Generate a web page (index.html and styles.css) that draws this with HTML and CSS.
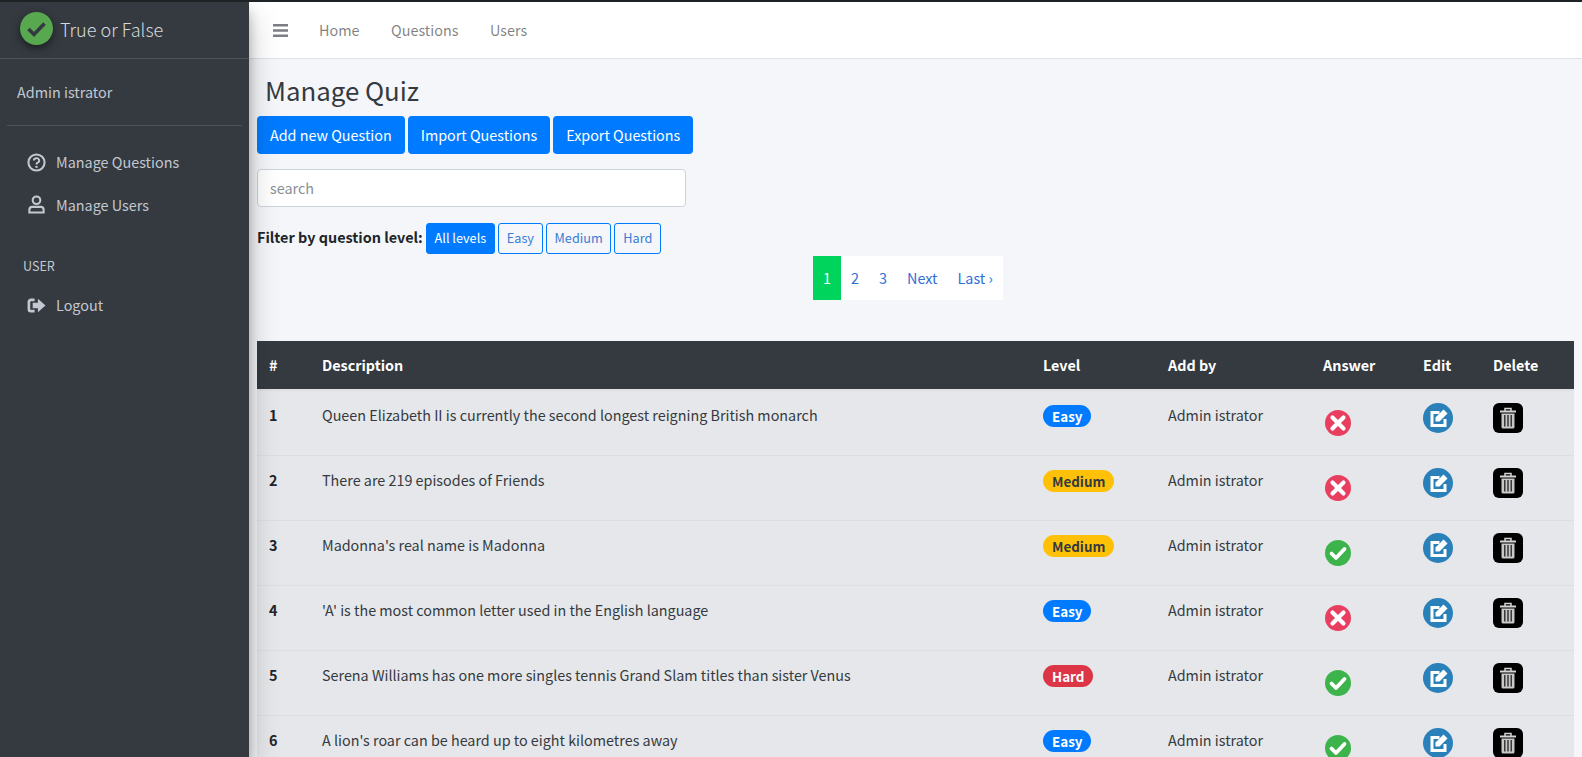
FILE: index.html
```html
<!DOCTYPE html>
<html lang="en">
<head>
  <meta charset="UTF-8">
  <title>Manage Quiz</title>
  <link rel="stylesheet" href="styles.css">
</head>
<body>
  <svg class="defs" width="0" height="0">
    <symbol id="i-check" viewBox="0 0 26 26">
      <circle cx="13" cy="13" r="13" fill="#3cb44b"/>
      <path d="M6.500 13.500l4.500 4.500 8.500-9" fill="none" stroke="#fff" stroke-width="3.800" stroke-linecap="round" stroke-linejoin="round"/>
    </symbol>
    <symbol id="i-cross" viewBox="0 0 26 26">
      <circle cx="13" cy="13" r="13" fill="#e83e5f"/>
      <path d="M7.500 7.500l11 11M18.500 7.500l-11 11" fill="none" stroke="#fff" stroke-width="4.200" stroke-linecap="round"/>
    </symbol>
    <symbol id="i-edit" viewBox="0 0 30 30">
      <circle cx="15" cy="15" r="15" fill="#2a80b9"/>
      <path d="M16.500 9.500H9v13h13V16" fill="none" stroke="#fff" stroke-width="3"/>
      <path d="M12.500 18.500v-4l8-8 4 4-8 8z" fill="#fff"/>
    </symbol>
    <symbol id="i-trash" viewBox="0 0 30 30">
      <rect width="30" height="30" rx="6" fill="#000"/>
      <path d="M7 8.500h16" stroke="#d4d4d4" stroke-width="2"/>
      <path d="M12 8V5.500h6V8" fill="none" stroke="#d4d4d4" stroke-width="1.500"/>
      <path d="M8.500 10.500h13v13.500a1.500 1.500 0 0 1-1.500 1.500H10a1.500 1.500 0 0 1-1.500-1.500z" fill="#c8c8c8"/>
      <path d="M11.800 12v11.500M15 12v11.500M18.200 12v11.500" stroke="#222" stroke-width="1.300"/>
    </symbol>
  </svg>

  <aside class="sidebar">
    <div class="brand">
      <svg class="brand-logo" viewBox="0 0 33 33">
        <circle cx="16.500" cy="16.500" r="16.500" fill="#58a84f"/>
        <path d="M8.500 17l5.500 5.500 10.500-11" fill="none" stroke="#343a40" stroke-width="3.600"/>
      </svg>
      <span>True or False</span>
    </div>
    <div class="user-panel">Admin istrator</div>
    <nav class="side-nav">
      <a href="#">
        <svg class="side-icon" viewBox="0 0 20 20">
          <circle cx="10" cy="10" r="8.500" fill="none" stroke="currentColor" stroke-width="2.200"/>
          <path d="M7.200 8a2.800 2.500 0 1 1 4 2.200c-.9.500-1.200.9-1.200 1.800" fill="none" stroke="currentColor" stroke-width="2"/>
          <circle cx="10" cy="14.600" r="1.300" fill="currentColor"/>
        </svg>
        Manage Questions
      </a>
      <a href="#">
        <svg class="side-icon" viewBox="0 0 20 20">
          <circle cx="10" cy="5.500" r="4" fill="none" stroke="currentColor" stroke-width="2.200"/>
          <path d="M2.500 18.500v-3a3 3 0 0 1 3-3h9a3 3 0 0 1 3 3v3z" fill="none" stroke="currentColor" stroke-width="2.200"/>
        </svg>
        Manage Users
      </a>
      <div class="side-header">USER</div>
      <a href="#">
        <svg class="side-icon" viewBox="0 0 20 20">
          <path d="M8 4H4a2 2 0 0 0-2 2v8a2 2 0 0 0 2 2h4" fill="none" stroke="currentColor" stroke-width="2.800"/>
          <path d="M6 7h5.500V3L19.500 10l-8 7v-4H6z" fill="currentColor"/>
        </svg>
        Logout
      </a>
    </nav>
  </aside>

  <div class="wrapper">
    <header class="topbar">
      <svg class="burger" viewBox="0 0 15 13">
        <path d="M0 1.200h15M0 6.500h15M0 11.800h15" stroke="#7b7f84" stroke-width="2.400"/>
      </svg>
      <a href="#">Home</a>
      <a href="#">Questions</a>
      <a href="#">Users</a>
    </header>

    <main class="content">
      <h1>Manage Quiz</h1>
      <div class="actions">
        <button class="btn">Add new Question</button>
        <button class="btn">Import Questions</button>
        <button class="btn">Export Questions</button>
      </div>
      <input class="search" type="text" placeholder="search">
      <div class="filter">
        <b>Filter by question level:</b>
        <button class="chip active">All levels</button>
        <button class="chip">Easy</button>
        <button class="chip">Medium</button>
        <button class="chip">Hard</button>
      </div>
      <div class="pager">
        <a class="current" href="#">1</a>
        <a href="#">2</a>
        <a href="#">3</a>
        <a class="wide" href="#">Next</a>
        <a class="wide" href="#">Last ›</a>
      </div>

      <table class="quiz">
        <thead>
          <tr>
            <th class="c-num">#</th>
            <th class="c-desc">Description</th>
            <th class="c-level">Level</th>
            <th class="c-by">Add by</th>
            <th class="c-ans">Answer</th>
            <th class="c-edit">Edit</th>
            <th class="c-del">Delete</th>
          </tr>
        </thead>
        <tbody>
          <tr>
            <th>1</th>
            <td>Queen Elizabeth II is currently the second longest reigning British monarch</td>
            <td><span class="badge easy">Easy</span></td>
            <td>Admin istrator</td>
            <td><svg class="answer"><use href="#i-cross"/></svg></td>
            <td><svg class="tool"><use href="#i-edit"/></svg></td>
            <td><svg class="tool"><use href="#i-trash"/></svg></td>
          </tr>
          <tr>
            <th>2</th>
            <td>There are 219 episodes of Friends</td>
            <td><span class="badge medium">Medium</span></td>
            <td>Admin istrator</td>
            <td><svg class="answer"><use href="#i-cross"/></svg></td>
            <td><svg class="tool"><use href="#i-edit"/></svg></td>
            <td><svg class="tool"><use href="#i-trash"/></svg></td>
          </tr>
          <tr>
            <th>3</th>
            <td>Madonna's real name is Madonna</td>
            <td><span class="badge medium">Medium</span></td>
            <td>Admin istrator</td>
            <td><svg class="answer"><use href="#i-check"/></svg></td>
            <td><svg class="tool"><use href="#i-edit"/></svg></td>
            <td><svg class="tool"><use href="#i-trash"/></svg></td>
          </tr>
          <tr>
            <th>4</th>
            <td>'A' is the most common letter used in the English language</td>
            <td><span class="badge easy">Easy</span></td>
            <td>Admin istrator</td>
            <td><svg class="answer"><use href="#i-cross"/></svg></td>
            <td><svg class="tool"><use href="#i-edit"/></svg></td>
            <td><svg class="tool"><use href="#i-trash"/></svg></td>
          </tr>
          <tr>
            <th>5</th>
            <td>Serena Williams has one more singles tennis Grand Slam titles than sister Venus</td>
            <td><span class="badge hard">Hard</span></td>
            <td>Admin istrator</td>
            <td><svg class="answer"><use href="#i-check"/></svg></td>
            <td><svg class="tool"><use href="#i-edit"/></svg></td>
            <td><svg class="tool"><use href="#i-trash"/></svg></td>
          </tr>
          <tr>
            <th>6</th>
            <td>A lion's roar can be heard up to eight kilometres away</td>
            <td><span class="badge easy">Easy</span></td>
            <td>Admin istrator</td>
            <td><svg class="answer"><use href="#i-check"/></svg></td>
            <td><svg class="tool"><use href="#i-edit"/></svg></td>
            <td><svg class="tool"><use href="#i-trash"/></svg></td>
          </tr>
        </tbody>
      </table>
    </main>
  </div>
</body>
</html>
```

FILE: styles.css
```css
html, body {
  height: 100%;
  overflow: hidden;
}
body {
  margin: 0;
  display: flex;
  font-family: "Noto Sans CJK SC", "Noto Sans", sans-serif;
  font-size: 14.4px;
  line-height: 24px;
  color: #212529;
  background-color: #f4f6f9;
  border-top: 2px solid #1f2225;
  box-sizing: border-box;
}
a {
  text-decoration: none;
}
.defs {
  position: absolute;
}

/* sidebar */
.sidebar {
  width: 249px;
  flex-shrink: 0;
  background-color: #343a40;
  color: #c2c7d0;
  box-shadow: 0 14px 28px rgba(0, 0, 0, 0.25), 0 10px 10px rgba(0, 0, 0, 0.22);
  z-index: 2;
}
.brand {
  height: 56px;
  display: flex;
  align-items: center;
  gap: 7px;
  padding-left: 20px;
  border-bottom: 1px solid #4b545c;
  font-size: 18.100px;
  font-weight: 300;
  color: #d5d8dc;
}
.brand span {
  padding-bottom: 2px;
}
.brand-logo {
  width: 33px;
  height: 33px;
  margin-top: -3px;
  filter: drop-shadow(0 3px 4px rgba(0, 0, 0, 0.5));
}
.user-panel {
  margin: 0 7px;
  padding: 21px 10px;
  height: 67px;
  box-sizing: border-box;
  border-bottom: 1px solid #4b545c;
}
.side-nav {
  padding-top: 15px;
}
.side-nav a {
  display: flex;
  align-items: center;
  gap: 10px;
  height: 42.500px;
  padding-left: 27px;
  color: #c2c7d0;
}
.side-icon {
  width: 19px;
  height: 19px;
}
.side-header {
  height: 24px;
  padding: 28px 0 6px 23px;
  font-size: 12.600px;
  color: #c2c7d0;
}

/* top bar */
.wrapper {
  flex: 1;
  min-width: 0;
}
.topbar {
  height: 56px;
  display: flex;
  align-items: center;
  padding-left: 24px;
  background-color: #fff;
  border-bottom: 1px solid #dee2e6;
}
.burger {
  width: 15px;
  height: 13px;
  margin-right: 31px;
}
.topbar a {
  margin-right: 31.500px;
  color: rgba(0, 0, 0, 0.5);
}

/* content */
.content {
  padding: 0 8px;
}
h1 {
  margin: 0;
  padding: 14px 0 0 8px;
  height: 43px;
  font-size: 25.800px;
  line-height: 34px;
  font-weight: 400;
  color: #343a40;
}
.actions {
  display: flex;
  gap: 3px;
}
.btn {
  height: 38px;
  padding: 0 13px;
  border: 0;
  border-radius: 4px;
  background-color: #007bff;
  color: #fff;
  font: inherit;
  font-size: 14.350px;
}
.search {
  display: block;
  width: 429px;
  height: 38px;
  margin-top: 15px;
  padding: 0 12px 2px;
  box-sizing: border-box;
  border: 1px solid #ced4da;
  border-radius: 4px;
  background-color: #fff;
  font: inherit;
}
.search::placeholder {
  color: #8a9096;
}
.filter {
  display: flex;
  align-items: center;
  gap: 3px;
  margin-top: 16px;
}
.filter b {
  padding-bottom: 3px;
}
.chip {
  height: 31px;
  padding: 0 7.800px 2px;
  border: 1px solid #007bff;
  border-radius: 3px;
  background-color: transparent;
  color: #3a7bd5;
  font: inherit;
  font-size: 12.700px;
}
.chip.active {
  background-color: #007bff;
  color: #fff;
}
.pager {
  display: flex;
  width: fit-content;
  margin: 2px 0 0 556px;
  background-color: #fff;
  height: 44px;
}
.pager a {
  width: 28px;
  line-height: 44px;
  text-align: center;
  color: #2f6fd6;
}
.pager a.wide {
  width: auto;
  padding: 0 10px;
}
.pager a.current {
  background-color: #00d45c;
  color: #fff;
}

/* table */
.quiz {
  width: 1317px;
  margin-top: 41px;
  table-layout: fixed;
  border-collapse: separate;
  border-spacing: 0;
  background-color: #e6e7ea;
  font-size: 14.350px;
}
.quiz thead th {
  box-sizing: border-box;
  height: 49px;
  padding: 0 12px;
  text-align: left;
  background-color: #343a40;
  color: #fff;
  border-bottom: 1px solid #dee2e6;
}
.quiz tbody th,
.quiz tbody td {
  height: 65px;
  box-sizing: border-box;
  padding: 12px 12px 0;
  vertical-align: top;
  text-align: left;
  border-top: 1px solid #dcdee1;
  color: #343a40;
}
.quiz tbody th {
  color: #212529;
}
.c-num { width: 53px; }
.c-desc { width: 721px; }
.c-level { width: 125px; }
.c-by { width: 155px; }
.c-ans { width: 100px; }
.c-edit { width: 70px; }
.c-del { width: 93px; }
.badge {
  display: inline-block;
  height: 22px;
  padding: 0 9px;
  border-radius: 11px;
  font-size: 13.400px;
  line-height: 22px;
  font-weight: 700;
  vertical-align: -1px;
}
.easy { background-color: #007bff; color: #fff; }
.medium { background-color: #ffc107; color: #343a40; }
.hard { background-color: #dc3545; color: #fff; }
.answer {
  display: block;
  width: 26px;
  height: 26px;
  margin: 7px 0 0 2px;
}
.tool {
  display: block;
  width: 30px;
  height: 30px;
}
```
